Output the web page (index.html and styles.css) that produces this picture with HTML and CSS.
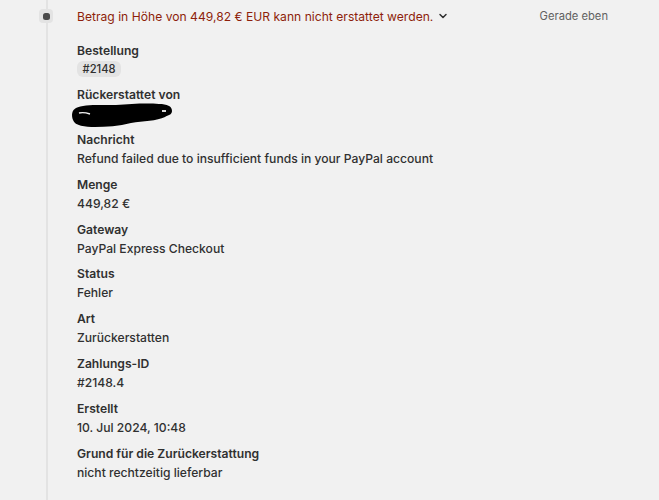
FILE: index.html
```html
<!DOCTYPE html>
<html lang="de">
<head>
<meta charset="utf-8">
<title>Rückerstattung</title>
<link rel="stylesheet" href="styles.css">
</head>
<body>
<div class="timeline">
  <div class="event">
    <span class="marker"><span class="marker-dot"></span></span>
    <div class="event-head">
      <span class="event-title">Betrag in Höhe von 449,82 € EUR kann nicht erstattet werden.</span>
      <svg class="chevron" width="10" height="10" viewBox="0 0 10 10"><path d="M2 3.5 L5 6.5 L8 3.5" fill="none" stroke="#303030" stroke-width="1.5" stroke-linecap="round" stroke-linejoin="round"/></svg>
      <span class="event-time">Gerade eben</span>
    </div>
    <dl class="details">
      <div class="item"><dt>Bestellung</dt><dd class="badge-row"><span class="badge">#2148</span></dd></div>
      <div class="item"><dt>Rückerstattet von</dt><dd class="redacted"><svg width="102" height="26" viewBox="0 0 102 26"><path d="M5 6 C12 2 30 3 45 3 C60 2 75 1 88 2 C96 2 101 4 101 9 C101 13 97 13 94 15 C86 19 72 19 60 21 C48 24 35 25 24 25 C14 25 4 24 2 18 C0 13 1 8 5 6 Z" fill="#000"/><path d="M8 11 C12 10 16 11 19 12" stroke="#f1f1f1" stroke-width="1.4" fill="none"/><path d="M91 9 L95 9" stroke="#f1f1f1" stroke-width="1.8"/></svg></dd></div>
      <div class="item"><dt>Nachricht</dt><dd>Refund failed due to insufficient funds in your PayPal account</dd></div>
      <div class="item"><dt>Menge</dt><dd>449,82 €</dd></div>
      <div class="item"><dt>Gateway</dt><dd>PayPal Express Checkout</dd></div>
      <div class="item"><dt>Status</dt><dd>Fehler</dd></div>
      <div class="item"><dt>Art</dt><dd>Zurückerstatten</dd></div>
      <div class="item"><dt>Zahlungs-ID</dt><dd>#2148.4</dd></div>
      <div class="item"><dt>Erstellt</dt><dd>10. Jul 2024, 10:48</dd></div>
      <div class="item"><dt>Grund für die Zurückerstattung</dt><dd>nicht rechtzeitig lieferbar</dd></div>
    </dl>
  </div>
</div>
</body>
</html>
```
FILE: styles.css
```css
html, body {
  margin: 0;
  padding: 0;
  background: #f1f1f1;
}
body {
  font-family: Inter, "Noto Sans", sans-serif;
  font-size: 12.13px;
  line-height: 19px;
  color: #303030;
  height: 500px;
  overflow: hidden;
}
.timeline {
  margin-left: 46px;
  border-left: 2px solid #e3e3e3;
  min-height: 500px;
  box-sizing: border-box;
  padding-left: 29px;
  padding-right: 51px;
}
.event {
  position: relative;
  padding-top: 6.5px;
}
.marker {
  position: absolute;
  left: -38px;
  top: 9px;
  width: 14px;
  height: 14px;
  border-radius: 4px;
  background: #e3e3e3;
  display: flex;
  align-items: center;
  justify-content: center;
}
.marker-dot {
  width: 7px;
  height: 7px;
  border-radius: 2.5px;
  background: #4a4a4a;
}
.event-head {
  display: flex;
  align-items: center;
  height: 19px;
}
.event-title {
  color: #8e1f0b;
}
.chevron {
  margin-left: 5px;
}
.event-time {
  margin-left: auto;
  color: #616161;
  font-size: 11.2px;
}
.details {
  margin: 15px 0 0 0;
  display: flex;
  flex-direction: column;
  gap: 6.8px;
}
.item {
  display: flex;
  flex-direction: column;
}
.item dt {
  font-weight: 600;
  height: 19px;
}
.item dd {
  margin: 0;
  height: 19px;
  overflow: visible;
  font-weight: 450;
}
.badge-row {
  display: flex;
  align-items: center;
}
.badge {
  display: inline-block;
  background: #e3e3e3;
  border-radius: 6px;
  padding: 0 5.5px;
  font-size: 11.2px;
  line-height: 16px;
}
.redacted {
  margin-left: -6px !important;
}
.redacted svg {
  display: block;
  margin-top: -2px;
}
```
